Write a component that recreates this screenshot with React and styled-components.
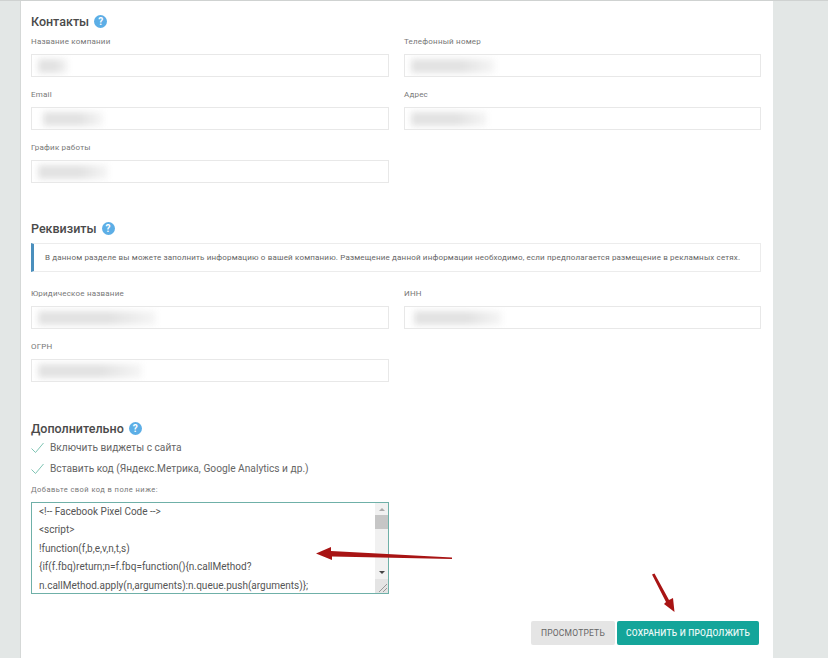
import React from 'react';
import styled, { createGlobalStyle } from 'styled-components';

const GlobalStyle = createGlobalStyle`
  html, body {
    margin: 0;
    padding: 0;
    height: 100%;
    overflow: hidden;
    background: #e3e7e6;
    font-family: Roboto, "Liberation Sans", sans-serif;
  }
`;

const Page = styled.div`
  position: relative;
  width: 828px;
  height: 658px;
  overflow: hidden;
  background: #e3e7e6;
  border-top: 1px solid #cfd2d1;
  box-sizing: border-box;
`;

const Panel = styled.main`
  width: 753px;
  height: 100%;
  margin-left: 20px;
  padding: 10px 0 0 10px;
  box-sizing: border-box;
  background: #fff;
  border-left: 1px solid #d5d8d7;
`;

const Heading = styled.h2`
  display: flex;
  align-items: center;
  gap: 5px;
  height: 20px;
  margin: ${({ $top }) => $top || 0}px 0 0;
  font-size: 12.5px;
  font-weight: 500;
  color: #4a4a4a;
`;

const Help = styled.span`
  display: flex;
  align-items: center;
  justify-content: center;
  width: 13px;
  height: 13px;
  border-radius: 50%;
  background: #5caee6;
  color: #fff;
  font-size: 10px;
  font-weight: 700;
`;

const FieldGrid = styled.div`
  display: grid;
  grid-template-columns: 358px 357px;
  column-gap: 15px;
  row-gap: 12px;
  margin-top: ${({ $top }) => $top}px;
`;

const Field = styled.div`
  display: flex;
  flex-direction: column;
`;

const Label = styled.label`
  height: 12px;
  margin-bottom: 6px;
  font-size: 8px;
  line-height: 12px;
  letter-spacing: 0.2px;
  color: #777;
`;

const Input = styled.div`
  display: flex;
  align-items: center;
  height: 23px;
  padding-left: 3px;
  box-sizing: border-box;
  border: 1px solid #e8e8e8;
  background: #fff;
  overflow: hidden;
`;

const Smudge = styled.span`
  width: ${({ $width }) => $width}px;
  height: 14px;
  margin-left: ${({ $left }) => $left || 0}px;
  background: linear-gradient(90deg, #e2e2e2 0%, #e2e2e2 60%, #f6f6f6 100%);
  filter: blur(3px);
`;

const Notice = styled.div`
  display: flex;
  align-items: center;
  width: 730px;
  height: 29px;
  margin-top: 5px;
  padding-left: 11px;
  box-sizing: border-box;
  border: 1px solid #ececec;
  border-left: 3px solid #4a8fbd;
  font-size: 8px;
  letter-spacing: 0.17px;
  color: #666;
  white-space: nowrap;
`;

const CheckRow = styled.div`
  display: flex;
  align-items: center;
  gap: 6px;
  height: 21px;
  font-size: 10.2px;
  color: #666;
`;

const ChecksBlock = styled.div`
  margin-top: -1px;
`;

const HintLabel = styled.div`
  height: 12px;
  margin: 5px 0 6px;
  font-size: 7.5px;
  line-height: 12px;
  letter-spacing: 0.45px;
  color: #777;
`;

const CodeBox = styled.div`
  display: flex;
  width: 358px;
  height: 92px;
  box-sizing: border-box;
  border: 1px solid #6fb0a8;
  background: #fff;
  overflow: hidden;
`;

const CodeText = styled.pre`
  flex: 1;
  margin: 0;
  padding: 0 0 0 7px;
  font-family: Roboto, "Liberation Sans", sans-serif;
  font-size: 10px;
  line-height: 18.4px;
  color: #555;
  white-space: pre;
  overflow: hidden;
`;

const Scrollbar = styled.div`
  display: flex;
  flex-direction: column;
  align-items: center;
  width: 13px;
  background: #f1f1f1;
`;

const ScrollArrow = styled.div`
  flex: none;
  width: 0;
  height: 0;
  margin: ${({ $margin }) => $margin};
  border-left: 3px solid transparent;
  border-right: 3px solid transparent;
  ${({ $up }) => ($up ? 'border-bottom: 3px solid #aaa;' : 'border-top: 3px solid #444;')}
`;

const ScrollThumb = styled.div`
  flex: none;
  width: 100%;
  height: 14px;
  background: #c6c6c6;
`;

const ResizeCorner = styled.div`
  flex: none;
  display: flex;
  width: 100%;
  height: 14px;
  background: #e4e4e4;
`;

const Actions = styled.div`
  display: flex;
  justify-content: flex-end;
  gap: 2px;
  width: 728px;
  margin-top: 27px;
`;

const Button = styled.button`
  height: 24px;
  width: ${({ $width }) => $width}px;
  padding: 0;
  border: 0;
  border-radius: 2px;
  background: ${({ $primary }) => ($primary ? '#14a59a' : '#e5e5e5')};
  color: ${({ $primary }) => ($primary ? '#e8f8f6' : '#666')};
  font-family: Roboto, "Liberation Sans", sans-serif;
  font-size: 8.5px;
  font-weight: ${({ $primary }) => ($primary ? 500 : 400)};
  letter-spacing: 0.2px;
  text-transform: uppercase;
`;

const ArrowLayer = styled.svg`
  position: absolute;
  top: 0;
  left: 0;
  pointer-events: none;
`;

const Check = () => (
  <svg width="13" height="12" viewBox="0 0 13 12" fill="none">
    <path d="M0.5 6.5 L4.5 10.5 L12.5 1" stroke="#7fc4b4" strokeWidth="1" />
  </svg>
);

const Resize = () => (
  <svg width="13" height="14" viewBox="0 0 13 14" fill="none">
    <path d="M4 13 L12 5 M8 13 L12 9" stroke="#999" strokeWidth="1" />
  </svg>
);

const code = `<!-- Facebook Pixel Code -->
<script>
!function(f,b,e,v,n,t,s)
{if(f.fbq)return;n=f.fbq=function(){n.callMethod?
n.callMethod.apply(n,arguments):n.queue.push(arguments)};`;

const contactFields = [
  { label: 'Название компании', smudge: 30, left: 3 },
  { label: 'Телефонный номер', smudge: 84, left: 3 },
  { label: 'Email', smudge: 60, left: 8 },
  { label: 'Адрес', smudge: 76, left: 3 },
  { label: 'График работы', smudge: 70, left: 3 },
];

const legalFields = [
  { label: 'Юридическое название', smudge: 118, left: 3 },
  { label: 'ИНН', smudge: 88, left: 6 },
  { label: 'ОГРН', smudge: 104, left: 3 },
];

const renderFields = (fields) =>
  fields.map((field) => (
    <Field key={field.label}>
      <Label>{field.label}</Label>
      <Input>
        <Smudge $width={field.smudge} $left={field.left} />
      </Input>
    </Field>
  ));

const App = () => (
  <Page>
    <GlobalStyle />
    <Panel>
      <Heading>
        Контакты <Help>?</Help>
      </Heading>
      <FieldGrid $top={5}>{renderFields(contactFields)}</FieldGrid>

      <Heading $top={35}>
        Реквизиты <Help>?</Help>
      </Heading>
      <Notice>
        В данном разделе вы можете заполнить информацию о вашей компанию. Размещение данной информации необходимо, если предполагается размещение в рекламных сетях.
      </Notice>
      <FieldGrid $top={16}>{renderFields(legalFields)}</FieldGrid>

      <Heading $top={36}>
        Дополнительно <Help>?</Help>
      </Heading>
      <ChecksBlock>
        <CheckRow>
          <Check />
          Включить виджеты с сайта
        </CheckRow>
        <CheckRow>
          <Check />
          Вставить код (Яндекс.Метрика, Google Analytics и др.)
        </CheckRow>
      </ChecksBlock>
      <HintLabel>Добавьте свой код в поле ниже:</HintLabel>
      <CodeBox>
        <CodeText>{code}</CodeText>
        <Scrollbar>
          <ScrollArrow $up $margin="5px 0 4px" />
          <ScrollThumb />
          <ScrollArrow $margin="auto 0 5px" />
          <ResizeCorner>
            <Resize />
          </ResizeCorner>
        </Scrollbar>
      </CodeBox>
      <Actions>
        <Button $width={84}>Просмотреть</Button>
        <Button $width={142} $primary>
          Сохранить и продолжить
        </Button>
      </Actions>
    </Panel>

    <ArrowLayer width="828" height="658" viewBox="0 0 828 658">
      <polygon points="452,556.5 452,558 332,555.5 332,559 316,552.5 331,546 331,550" fill="#a81414" />
      <polygon points="652,573.5 654.5,572.5 669,599 673,597 674.5,611 664,603 666,601" fill="#a81414" />
    </ArrowLayer>
  </Page>
);

export default App;
